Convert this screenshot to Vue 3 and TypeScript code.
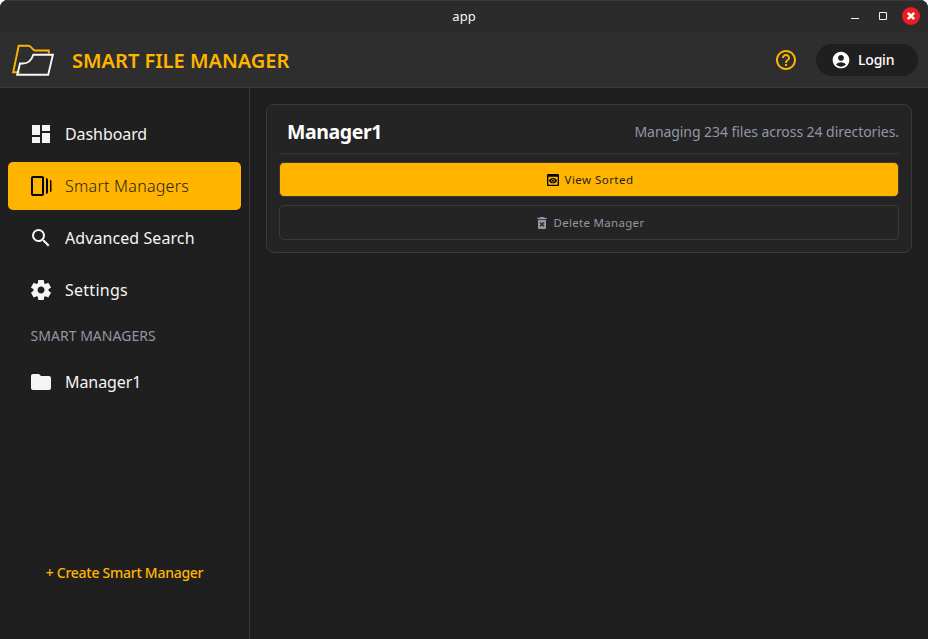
<script setup lang="ts">
interface NavItem {
  label: string
  icon: string
  fit: string
  active?: boolean
}

const navItems: NavItem[] = [
  { label: 'Dashboard', fit: 'snug', icon: 'M3 13h8V3H3v10zm0 8h8v-6H3v6zm10 0h8V11h-8v10zm0-18v6h8V3h-8z' },
  {
    label: 'Smart Managers',
    fit: 'loose',
    active: true,
    icon: 'M4 2h9a2 2 0 0 1 2 2v16a2 2 0 0 1-2 2H4a2 2 0 0 1-2-2V4a2 2 0 0 1 2-2zm0 2v16h9V4H4zM17 4c1.1 0 2 .9 2 2v12c0 1.1-.9 2-2 2V4zM21 5.800c.9.2 1.500.9 1.500 1.700v9c0 .8-.6 1.500-1.500 1.700V5.800z',
  },
  {
    label: 'Advanced Search',
    fit: 'even',
    icon: 'M15.500 14h-.79l-.28-.27A6.471 6.471 0 0 0 16 9.500 6.500 6.500 0 1 0 9.500 16c1.610 0 3.090-.59 4.230-1.570l.27.28v.79l5 4.990L20.490 19l-4.990-5zm-6 0C7.010 14 5 11.990 5 9.500S7.010 5 9.500 5 14 7.010 14 9.500 11.990 14 9.500 14z',
  },
  {
    label: 'Settings',
    fit: 'loose',
    icon: 'm9.250 22-.4-3.200q-.325-.125-.612-.3-.288-.175-.563-.375L4.700 19.375l-2.750-4.750 2.575-1.950Q4.500 12.500 4.500 12.338v-.675q0-.163.025-.338L1.950 9.375l2.750-4.750 2.975 1.250q.275-.2.575-.375.3-.175.6-.3l.4-3.200h5.500l.4 3.200q.325.125.613.3.287.175.562.375l2.975-1.250 2.750 4.750-2.575 1.950q.025.175.025.338v.675q0 .162-.05.337l2.575 1.950-2.750 4.750-2.950-1.250q-.275.2-.575.375-.3.175-.6.3l-.4 3.200Zm2.800-6.500q1.450 0 2.475-1.025Q15.550 13.450 15.550 12q0-1.450-1.025-2.475Q13.500 8.500 12.050 8.500q-1.475 0-2.488 1.025Q8.550 10.550 8.550 12q0 1.450 1.012 2.475Q10.575 15.500 12.050 15.500Z',
  },
]

const managers: NavItem[] = [
  { label: 'Manager1', fit: 'snug', icon: 'M10 4H4c-1.100 0-1.990.9-1.990 2L2 18c0 1.100.9 2 2 2h16c1.100 0 2-.9 2-2V8c0-1.100-.9-2-2-2h-8l-2-2z' },
]
</script>

<template>
  <div class="window">
    <div class="titlebar">
      <span class="window-title">app</span>
      <div class="controls">
        <svg class="ctl" viewBox="0 0 18 18"><path d="M5 11.500h8" stroke="#f2f2f2" /></svg>
        <svg class="ctl" viewBox="0 0 18 18"><path d="M5.500 5.500h7v7h-7z" fill="none" stroke="#f2f2f2" /></svg>
        <svg class="ctl" viewBox="0 0 18 18"><circle cx="9" cy="9" r="9" fill="#ec1c24" /><path d="m5.800 5.800 6.400 6.400m0-6.400-6.400 6.400" stroke="#fff" stroke-width="2.500" /></svg>
      </div>
    </div>
    <header class="header">
      <svg class="logo" viewBox="0 0 44 36" fill="none" stroke-width="1.900">
        <path d="M8.500 30.200H2.200L7.700 3.800h9.300c4 0 4.500 4.700 7 4.700h13.800v3" stroke="#ffb400" />
        <path d="M6.200 32.800 9 21.500h2.700c5 0 8.800-3.200 10.600-8.800h19.600l-4.700 20.100z" stroke="#f8f8f8" />
      </svg>
      <h1 class="brand">SMART FILE MANAGER</h1>
      <svg class="help" viewBox="0 0 24 24"><path d="M11 18h2v-2h-2v2zm1-16C6.480 2 2 6.480 2 12s4.480 10 10 10 10-4.480 10-10S17.520 2 12 2zm0 18c-4.410 0-8-3.590-8-8s3.590-8 8-8 8 3.590 8 8-3.590 8-8 8zm0-14c-2.210 0-4 1.790-4 4h2c0-1.100.9-2 2-2s2 .9 2 2c0 2-3 1.750-3 5h2c0-2.250 3-2.500 3-5 0-2.210-1.790-4-4-4z" /></svg>
      <button class="login">
        <svg viewBox="0 0 24 24"><path d="M12 2C6.480 2 2 6.480 2 12s4.480 10 10 10 10-4.480 10-10S17.520 2 12 2zm0 4c1.930 0 3.500 1.570 3.500 3.500S13.930 13 12 13s-3.500-1.570-3.500-3.500S10.070 6 12 6zm0 14c-2.030 0-4.430-.82-6.140-2.880a9.947 9.947 0 0 1 12.280 0C16.430 19.180 14.030 20 12 20z" /></svg>
        <span>Login</span>
      </button>
    </header>
    <div class="body">
      <aside class="sidebar">
        <nav class="nav">
          <a v-for="item in navItems" :key="item.label" class="item" :class="[item.fit, { active: item.active }]">
            <svg viewBox="0 0 24 24"><path :d="item.icon" /></svg>
            <span>{{ item.label }}</span>
          </a>
        </nav>
        <h2 class="section">SMART MANAGERS</h2>
        <nav class="nav">
          <a v-for="item in managers" :key="item.label" class="item" :class="item.fit">
            <svg viewBox="0 0 24 24"><path :d="item.icon" /></svg>
            <span>{{ item.label }}</span>
          </a>
        </nav>
        <button class="create">+ Create Smart Manager</button>
      </aside>
      <main class="content">
        <section class="card">
          <div class="card-head">
            <h3>Manager1</h3>
            <p>Managing 234 files across 24 directories.</p>
          </div>
          <button class="action primary">
            <svg viewBox="0 0 24 24"><path d="M19 3H5c-1.110 0-2 .9-2 2v14c0 1.100.89 2 2 2h14c1.100 0 2-.9 2-2V5c0-1.100-.9-2-2-2zm0 16H5V7h14v12zm-5.500-6c0 .83-.67 1.500-1.500 1.500s-1.500-.67-1.500-1.500.67-1.500 1.500-1.500 1.500.67 1.500 1.500zM12 9c-2.730 0-5.060 1.660-6 4 .94 2.340 3.270 4 6 4s5.060-1.660 6-4c-.94-2.340-3.270-4-6-4zm0 6.500c-1.380 0-2.500-1.120-2.500-2.500s1.120-2.500 2.500-2.500 2.500 1.120 2.500 2.500-1.120 2.500-2.500 2.500z" /></svg>
            <span>View Sorted</span>
          </button>
          <button class="action">
            <svg viewBox="0 0 24 24"><path d="M6 19c0 1.100.9 2 2 2h8c1.100 0 2-.9 2-2V7H6v12zm2.460-7.120 1.410-1.410L12 12.590l2.120-2.120 1.410 1.410L13.410 14l2.120 2.120-1.410 1.410L12 15.410l-2.120 2.120-1.410-1.410L10.590 14l-2.130-2.120zM15.500 4l-1-1h-5l-1 1H5v2h14V4h-3.500z" /></svg>
            <span>Delete Manager</span>
          </button>
        </section>
      </main>
    </div>
  </div>
</template>

<style>
body {
  background: #fff;
}
</style>

<style scoped>
* {
  box-sizing: border-box;
}
.window {
  display: flex;
  flex-direction: column;
  width: 100%;
  height: 639px;
  overflow: hidden;
  border-radius: 8px 8px 0 0;
  background: #1f1f1f;
  color: #f5f5f5;
  font-family: "Noto Sans", "Open Sans", sans-serif;
  white-space: nowrap;
}
svg {
  display: block;
  flex: none;
  fill: currentColor;
}
h1, h2, h3, p {
  margin: 0;
}
button {
  padding: 0;
  border: 0;
  background: none;
  color: inherit;
  font: inherit;
}
.titlebar {
  display: grid;
  grid-template-columns: 1fr auto 1fr;
  align-items: center;
  height: 32px;
  flex: none;
  box-shadow: inset 0 1px #3a3a3a;
  background: #2b2b2b;
}
.window-title {
  grid-column: 2;
  font-size: 13px;
}
.controls {
  display: flex;
  justify-content: flex-end;
  gap: 10px;
  padding-right: 8px;
}
.ctl {
  width: 18px;
  height: 18px;
}
.header {
  display: flex;
  align-items: center;
  height: 56px;
  flex: none;
  padding: 0 10px 0 11px;
  border-bottom: 1px solid #3a3a3a;
  background: #2e2e2e;
}
.logo {
  width: 44px;
  height: 36px;
  fill: none;
}
.brand {
  margin-left: 17px;
  padding-top: 2px;
  color: #ffb400;
  font-size: 20px;
  font-weight: 600;
}
.help {
  width: 24px;
  height: 24px;
  margin-left: auto;
  color: #ffb400;
}
.login {
  display: flex;
  align-items: center;
  gap: 7px;
  width: 102px;
  height: 32px;
  margin-left: 18px;
  padding-left: 15px;
  border-radius: 16px;
  background: #1f1f1f;
  color: #fff;
  font-size: 14px;
  font-weight: 500;
  letter-spacing: -0.2px;
}
.login svg {
  width: 20px;
  height: 20px;
}
.body {
  display: flex;
  flex: 1;
  min-height: 0;
}
.sidebar {
  display: flex;
  flex-direction: column;
  width: 250px;
  padding: 22px 8px 51px;
  border-right: 1px solid #3a3a3a;
}
.nav {
  display: flex;
  flex-direction: column;
  gap: 4px;
}
.item {
  display: flex;
  align-items: center;
  gap: 12px;
  height: 48px;
  padding-left: 21px;
  border-radius: 5px;
  font-size: 16px;
}
.item svg {
  width: 24px;
  height: 24px;
}
.snug {
  letter-spacing: -0.08px;
}
.even {
  letter-spacing: 0.08px;
}
.loose {
  letter-spacing: 0.26px;
}
.active {
  background: #ffb400;
  color: #1f1f1f;
  font-weight: 300;
}
.active svg {
  color: #000;
}
.section {
  display: flex;
  align-items: center;
  height: 44px;
  padding: 0 0 2px 22.5px;
  color: #9197a5;
  font-size: 14px;
  font-weight: 400;
  letter-spacing: 0.03px;
}
.create {
  height: 32px;
  margin-top: auto;
  color: #ffb400;
  font-size: 14px;
  font-weight: 500;
  letter-spacing: -0.27px;
}
.content {
  flex: 1;
  padding: 16px;
}
.card {
  display: flex;
  flex-direction: column;
  gap: 8px;
  height: 149px;
  padding: 0 12px 12px;
  border: 1px solid #3a3a3a;
  border-radius: 8px;
  background: #242424;
}
.card-head {
  display: flex;
  align-items: center;
  justify-content: space-between;
  height: 50px;
  margin-bottom: -1px;
  padding: 4px 0 0 8px;
  border-bottom: 2px solid #2e2e2e;
}
.card-head h3 {
  color: #fff;
  font-size: 19.5px;
  font-weight: 700;
  letter-spacing: -0.4px;
}
.card-head p {
  color: #9197a5;
  font-size: 14px;
  letter-spacing: -0.06px;
}
.action {
  display: flex;
  align-items: center;
  justify-content: center;
  gap: 4px;
  height: 35px;
  border: 1px solid #3a3a3a;
  border-radius: 5px;
  color: #9197a5;
  font-size: 11.5px;
  letter-spacing: 0.3px;
}
.action svg {
  width: 16px;
  height: 16px;
}
.primary {
  background: #ffb400;
  color: #1f1f1f;
  letter-spacing: 0.46px;
}
.primary svg {
  color: #000;
}
</style>
